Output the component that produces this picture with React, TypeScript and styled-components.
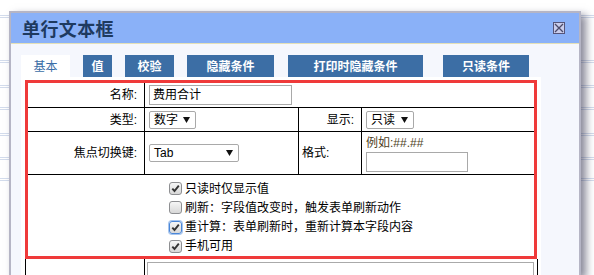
import React from "react";
import styled, {createGlobalStyle} from "styled-components";

// Faint table lines of the page behind the dialog
const lineYs = [15, 17, 60, 62, 85, 87, 107, 109, 133, 135, 157, 159, 178, 180];
const lineStops = lineYs
	.map((y) => `transparent ${y}px, #d3dcec ${y}px, #d3dcec ${y + 1}px, transparent ${y + 1}px`)
	.join(", ");

const GlobalStyle = createGlobalStyle`
	html, body {
		margin: 0;
		padding: 0;
	}
	body {
		width: 594px;
		height: 275px;
		overflow: hidden;
		background-color: #fff;
		background-image: linear-gradient(to bottom, transparent 0px, ${lineStops}, transparent 100%);
		font-family: "Liberation Sans", "Noto Sans CJK SC", sans-serif;
		font-size: 12px;
		color: #000;
	}
`;

const Dialog = styled.div`
	margin: 11px 0 0 9px;
	width: 572px;
	height: 264px;
	box-sizing: border-box;
	border: 2px solid #b5b5c5;
	border-bottom: none;
	background: #f5f7fd;
	box-shadow: 5px 4px 8px rgba(40, 40, 70, 0.55);
	display: flex;
	flex-direction: column;
	overflow: hidden;
`;

const TitleBar = styled.div`
	height: 31px;
	flex-shrink: 0;
	box-sizing: border-box;
	background: #8ab1f8;
	border-bottom: 1px solid #e4e0b8;
	display: flex;
	align-items: center;
	justify-content: space-between;
	padding: 0 14px 0 11px;
`;

const Title = styled.h1`
	margin: 0;
	font-family: "Noto Sans CJK SC", sans-serif;
	font-size: 18px;
	font-weight: 700;
	line-height: 22px;
	letter-spacing: 0.4px;
	color: #1e3a5f;
`;

const CloseButton = styled.div`
	width: 12px;
	height: 12px;
	box-sizing: border-box;
	border: 1px solid #55557a;
	background: #c9cdec;
	display: flex;
	align-items: center;
	justify-content: center;
`;

const Body = styled.div`
	flex: 1;
	min-height: 0;
	display: flex;
	flex-direction: column;
	padding: 11px 0 0 10px;
`;

const TabRow = styled.div`
	display: flex;
	flex-shrink: 0;
	height: 22px;
`;

const Tab = styled.div<{$active?: boolean; $width: number; $gap: number}>`
	width: ${(p) => p.$width}px;
	margin-left: ${(p) => p.$gap}px;
	display: flex;
	align-items: center;
	justify-content: center;
	font-family: "Noto Sans CJK SC", sans-serif;
	font-size: 12px;
	line-height: 16px;
	background: ${(p) => (p.$active ? "#fff" : "#3c6ea5")};
	color: ${(p) => (p.$active ? "#3a6da6" : "#fff")};
	font-weight: ${(p) => (p.$active ? 400 : 700)};
`;

const Panel = styled.div`
	flex: 1;
	min-height: 0;
	width: 520px;
	box-sizing: border-box;
	background: #fff;
	padding: 3px 0 0 4px;
	display: flex;
	flex-direction: column;
`;

const Highlight = styled.div`
	width: 512px;
	flex-shrink: 0;
	box-sizing: border-box;
	border: 3px solid #ef3a3a;
	background: #000;
	display: grid;
	grid-template-columns: 116px 153px 62px 172px;
	grid-template-rows: 24px 23px 42px 81px;
	gap: 1px;
`;

const Cell = styled.div<{$align?: "left" | "right"; $span?: number}>`
	background: #fff;
	display: flex;
	align-items: center;
	justify-content: ${(p) => (p.$align === "right" ? "flex-end" : "flex-start")};
	padding: ${(p) => (p.$align === "right" ? "0 7px 0 0" : "0 0 0 4px")};
	grid-column: span ${(p) => p.$span ?? 1};
	font-family: "Liberation Sans", "Noto Sans CJK SC", sans-serif;
	font-size: 12px;
	line-height: 16px;
`;

const LabelLeft = styled(Cell)`
	padding-left: 3px;
`;

const StackCell = styled(Cell)`
	flex-direction: column;
	align-items: flex-start;
	justify-content: flex-start;
	padding-top: 3px;
`;

const Hint = styled.div`
	line-height: 16px;
	color: #4e3f1e;
`;

const TextInput = styled.div<{$width: number}>`
	width: ${(p) => p.$width}px;
	height: 20px;
	box-sizing: border-box;
	border: 1px solid #a9a9a9;
	padding-left: 3px;
	line-height: 18px;
	margin-top: ${(p) => (p.$width < 120 ? 1 : 0)}px;
`;

const Select = styled.div<{$width: number}>`
	width: ${(p) => p.$width}px;
	height: 18px;
	box-sizing: border-box;
	border: 1px solid #a9a9a9;
	border-radius: 2px;
	padding: 0 5px 0 4px;
	display: flex;
	align-items: center;
	justify-content: space-between;
	line-height: 16px;
`;

const CheckList = styled(Cell)`
	flex-direction: column;
	align-items: flex-start;
	justify-content: flex-start;
	padding: 4px 0 0 141px;
`;

const CheckItem = styled.div`
	height: 19.7px;
	display: flex;
	align-items: center;
	gap: 3px;
	line-height: 16px;
	white-space: nowrap;
`;

const Box = styled.span<{$focus?: boolean}>`
	width: 13px;
	height: 13px;
	box-sizing: border-box;
	border: 1px solid ${(p) => (p.$focus ? "#4a86d8" : "#8e8f92")};
	border-radius: 3px;
	background: linear-gradient(#f6f6f6, #d8d8d8);
	box-shadow: ${(p) => (p.$focus ? "0 0 0 1px #a8c6ee" : "none")};
	display: flex;
	align-items: center;
	justify-content: center;
`;

const BottomRow = styled.div`
	flex: 1;
	width: 513px;
	box-sizing: border-box;
	border-left: 1px solid #000;
	border-right: 1px solid #000;
	display: grid;
	grid-template-columns: 119px 1fr;
`;

const BottomLabel = styled.div`
	border-right: 1px solid #000;
`;

const BottomField = styled.div`
	padding: 3px 3px 0 2px;
	overflow: hidden;
`;

const TextArea = styled.div`
	height: 60px;
	border: 1px solid #aaa;
`;

const Arrow = () => (
	<svg width="7" height="6" viewBox="0 0 7 6">
		<polygon points="0,0 7,0 3.5,6" fill="#111" />
	</svg>
);

const Check = () => (
	<svg width="11" height="11" viewBox="0 0 11 11">
		<path d="M2.3 5.6 L4.5 8 L8.8 2.6" fill="none" stroke="#333" strokeWidth="1.9" />
	</svg>
);

const tabs = [
	{label: "基本", width: 49, gap: 0, active: true},
	{label: "值", width: 29, gap: 13},
	{label: "校验", width: 49, gap: 13},
	{label: "隐藏条件", width: 87, gap: 13},
	{label: "打印时隐藏条件", width: 135, gap: 14},
	{label: "只读条件", width: 86, gap: 20},
];

const options = [
	{label: "只读时仅显示值", checked: true},
	{label: "刷新：字段值改变时，触发表单刷新动作", checked: false},
	{label: "重计算：表单刷新时，重新计算本字段内容", checked: true, focus: true},
	{label: "手机可用", checked: true},
];

const App = () => {
	return (
		<>
			<GlobalStyle />
			<Dialog>
				<TitleBar>
					<Title>单行文本框</Title>
					<CloseButton>
						<svg width="10" height="10" viewBox="0 0 10 10">
							<path d="M1 1 L9 9 M9 1 L1 9" stroke="#4a4a6a" strokeWidth="1.3" />
						</svg>
					</CloseButton>
				</TitleBar>
				<Body>
					<TabRow>
						{tabs.map((t) => (
							<Tab key={t.label} $active={t.active} $width={t.width} $gap={t.gap}>
								{t.label}
							</Tab>
						))}
					</TabRow>
					<Panel>
						<Highlight>
							<Cell $align="right">名称:</Cell>
							<Cell $span={3}>
								<TextInput $width={143}>费用合计</TextInput>
							</Cell>

							<Cell $align="right">类型:</Cell>
							<Cell>
								<Select $width={47}>
									数字
									<Arrow />
								</Select>
							</Cell>
							<Cell $align="right">显示:</Cell>
							<Cell>
								<Select $width={48}>
									只读
									<Arrow />
								</Select>
							</Cell>

							<Cell $align="right">焦点切换键:</Cell>
							<Cell>
								<Select $width={90}>
									Tab
									<Arrow />
								</Select>
							</Cell>
							<LabelLeft>格式:</LabelLeft>
							<StackCell>
								<Hint>例如:##.##</Hint>
								<TextInput $width={102} />
							</StackCell>

							<CheckList $span={4}>
								{options.map((o) => (
									<CheckItem key={o.label}>
										<Box $focus={o.focus}>{o.checked && <Check />}</Box>
										{o.label}
									</CheckItem>
								))}
							</CheckList>
						</Highlight>
						<BottomRow>
							<BottomLabel />
							<BottomField>
								<TextArea />
							</BottomField>
						</BottomRow>
					</Panel>
				</Body>
			</Dialog>
		</>
	);
};

export default App;
